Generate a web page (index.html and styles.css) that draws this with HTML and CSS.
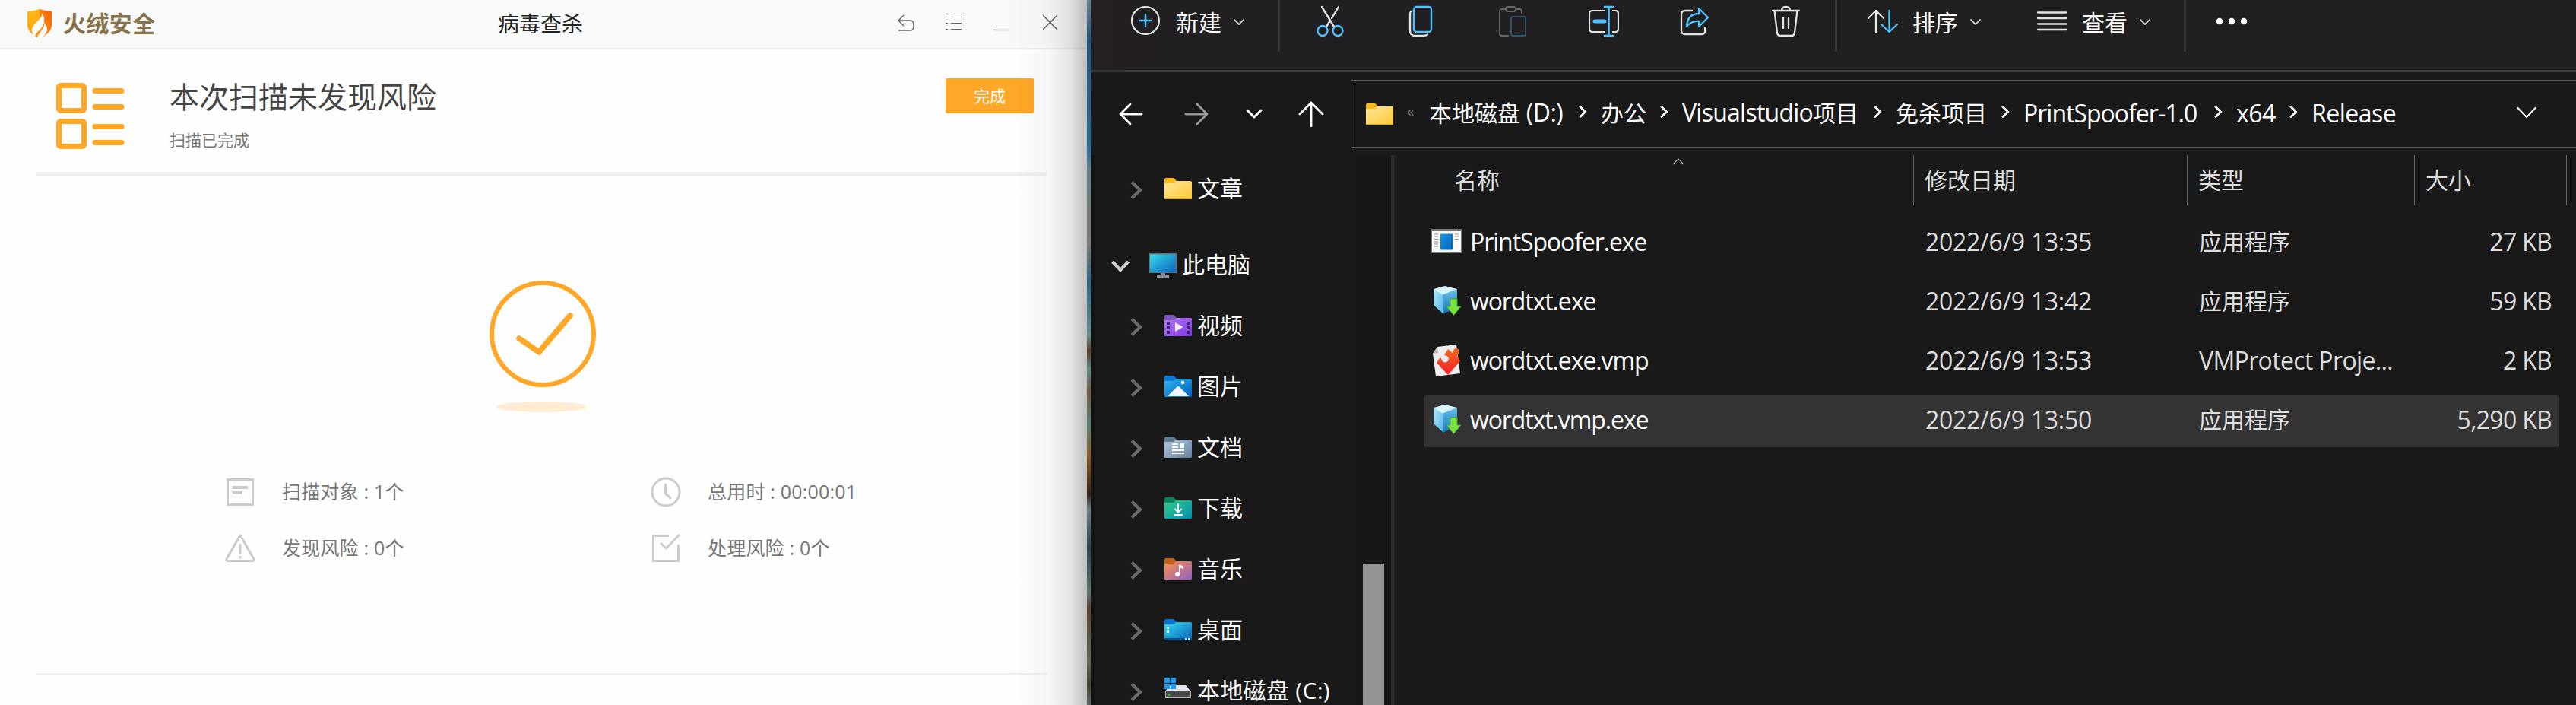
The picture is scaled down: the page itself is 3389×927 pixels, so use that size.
FILE: index.html
```html
<!DOCTYPE html>
<html lang="zh-CN">
<head>
<meta charset="utf-8">
<title>病毒查杀</title>
<link rel="stylesheet" href="styles.css">
</head>
<body>
<svg class="defs" width="0" height="0">
  <defs>
    <linearGradient id="gShieldL" x1="0" y1="0" x2="0" y2="1"><stop offset="0" stop-color="#ffb81c"/><stop offset="1" stop-color="#ffa20f"/></linearGradient>
    <linearGradient id="gShieldR" x1="1" y1="0" x2="0" y2="1"><stop offset="0" stop-color="#ff5a00"/><stop offset="1" stop-color="#ffa416"/></linearGradient>
    <linearGradient id="gYellow" x1="0" y1="0" x2="1" y2="1"><stop offset="0" stop-color="#ffe699"/><stop offset="1" stop-color="#ffc933"/></linearGradient>
    <linearGradient id="gPurple" x1="0" y1="0" x2="1" y2="1"><stop offset="0" stop-color="#b77bf7"/><stop offset="1" stop-color="#7f35e0"/></linearGradient>
    <linearGradient id="gBlue" x1="0" y1="0" x2="1" y2="1"><stop offset="0" stop-color="#2eb4f2"/><stop offset="1" stop-color="#0360b8"/></linearGradient>
    <linearGradient id="gSlate" x1="0" y1="0" x2="1" y2="1"><stop offset="0" stop-color="#b4cbe0"/><stop offset="1" stop-color="#6480a0"/></linearGradient>
    <linearGradient id="gGreen" x1="0" y1="0" x2="1" y2="1"><stop offset="0" stop-color="#33cc88"/><stop offset="1" stop-color="#028fae"/></linearGradient>
    <linearGradient id="gMusic" x1="0" y1="0" x2="1" y2="1"><stop offset="0" stop-color="#ff9248"/><stop offset="1" stop-color="#925fc4"/></linearGradient>
    <linearGradient id="gCyan" x1="0" y1="0" x2="1" y2="1"><stop offset="0" stop-color="#36dbea"/><stop offset="1" stop-color="#0a62bd"/></linearGradient>
    <linearGradient id="gApp" x1="0" y1="0" x2="1" y2="1"><stop offset="0" stop-color="#1798ea"/><stop offset="1" stop-color="#0560b8"/></linearGradient>
    <linearGradient id="gCubeL" x1="0" y1="0" x2="1" y2="1"><stop offset="0" stop-color="#b5e9fb"/><stop offset="1" stop-color="#56b8e8"/></linearGradient>
    <linearGradient id="gCubeR" x1="0" y1="0" x2="0" y2="1"><stop offset="0" stop-color="#67c0ea"/><stop offset="1" stop-color="#1477b8"/></linearGradient>
    <linearGradient id="gRed" x1="0" y1="0" x2="0" y2="1"><stop offset="0" stop-color="#f66a20"/><stop offset="1" stop-color="#f02028"/></linearGradient>
    <path id="tab" d="M0 2Q0 0 2 0H11Q13 0 14 2L16 4V8H0Z"/>
    <path id="sheet" d="M0 7H12L15.500 4H34.500Q36 4 36 5.500V26.500Q36 28 34.500 28H1.500Q0 28 0 26.500Z"/>
    <symbol id="cube" viewBox="0 0 40 40">
      <path d="M3 4L15 9.500V36L3 25Z" fill="url(#gCubeL)"/>
      <path d="M15 9.500L34 4V28L15 37Z" fill="url(#gCubeR)"/>
      <path d="M3 4L18 0L34 4L15 11.500Z" fill="#d9f4fd"/>
      <path d="M25 17H34V27H39L29.500 38.500L20 27H25Z" fill="#7be042" stroke="#43a326"/>
    </symbol>
    <symbol id="right" viewBox="0 0 16 24"><path d="M2 1.500L13 12L2 22.500" fill="none" stroke="#6b6b6b" stroke-width="4.200"/></symbol>
    <symbol id="crumb" viewBox="0 0 11 16"><path d="M2 1.500L8.500 8L2 14.500" fill="none" stroke="#fff" stroke-width="2.800" stroke-linecap="round"/></symbol>
    <symbol id="drop" viewBox="0 0 14 8"><path d="M1 1L7 7L13 1" fill="none" stroke="#cfcfcf" stroke-width="1.800" stroke-linecap="round"/></symbol>
  </defs>
</svg>

<div class="desktop">
  <section class="scanner">
    <header class="titlebar">
      <div class="brand">
        <svg width="34" height="40" viewBox="0 0 34 40">
          <path d="M17 1Q9 4 1 4V23Q2 33 17 39Z" fill="url(#gShieldL)"/>
          <path d="M17 1Q25 4 33 4V23Q32 33 17 39Z" fill="url(#gShieldR)"/>
          <path d="M20 6C22 14 7 20 7 29Q7 34 12 37C11 32 21 27 23 19C25 22 27 24 27 29Q25 35 18 39.500L11 37C13 32 21 30 23 23C23 16 24 12 20 6Z" fill="#fff"/>
          <path d="M11.500 37C11 31 19 29 22 23C21 29 16 33 14 38Z" fill="#ff9210"/>
        </svg>
        <span class="brand-name">火绒安全</span>
      </div>
      <h1 class="title">病毒查杀</h1>
      <div class="controls">
        <svg width="24" height="24" viewBox="0 0 24 24"><path d="M9 2L2 9L9 16M2 9H17Q22 9 22 14V17Q22 22 17 22H2" fill="none" stroke="#666" stroke-width="1.500"/></svg>
        <svg width="24" height="24" viewBox="0 0 24 24"><path d="M1 4.500H4M8 4.500H22M1 12.500H4M8 12.500H22M1 20.500H4M8 20.500H22" stroke="#666" stroke-width="1.200"/></svg>
        <svg width="24" height="24" viewBox="0 0 24 24"><path d="M1 21.500H22" stroke="#666" stroke-width="1.200"/></svg>
        <svg width="24" height="24" viewBox="0 0 24 24"><path d="M3 2L22 21M22 2L3 21" stroke="#666" stroke-width="1.700"/></svg>
      </div>
    </header>

    <div class="summary">
      <svg class="summary-icon" width="90" height="88" viewBox="0 0 90 88" fill="none" stroke="#ffa726">
        <rect x="3.500" y="3.500" width="33" height="33" rx="2.500" stroke-width="7"/>
        <rect x="3.500" y="50.500" width="33" height="33" rx="2.500" stroke-width="7"/>
        <path d="M51 10.500H86M51 31.500H86M51 57.500H86M51 78.500H86" stroke-width="7" stroke-linecap="round"/>
      </svg>
      <div class="summary-text">
        <h2>本次扫描未发现风险</h2>
        <p>扫描已完成</p>
      </div>
      <button class="done">完成</button>
    </div>

    <div class="result">
      <svg class="result-mark" width="142" height="174" viewBox="0 0 142 174">
        <circle cx="71" cy="71" r="67" fill="none" stroke="#ffa726" stroke-width="6"/>
        <path d="M40 77L66 95L107 47" fill="none" stroke="#ffa726" stroke-width="7.500" stroke-linecap="round" stroke-linejoin="round"/>
        <ellipse cx="69.500" cy="167" rx="59.500" ry="7" fill="#ffecd3"/>
      </svg>
      <ul class="stats">
        <li><svg width="40" height="40" viewBox="0 0 40 40" fill="none" stroke="#ccc"><rect x="3.500" y="3.500" width="33" height="33" stroke-width="3"/><path d="M9.500 14H30M9.500 21H23" stroke-width="4"/></svg><span>扫描对象 : 1个</span></li>
        <li><svg width="40" height="40" viewBox="0 0 40 40" fill="none" stroke="#ccc" stroke-width="3"><circle cx="20" cy="20" r="18"/><path d="M19.500 9V22L27 28.500"/></svg><span>总用时 : 00:00:01</span></li>
        <li><svg width="40" height="40" viewBox="0 0 40 40" fill="none" stroke="#ccc" stroke-width="3"><path d="M19 4.500Q20 2.500 21 4.500L38 34Q39 36.500 36 36.500H4Q1 36.500 2 34Z"/><path d="M20 14V28M20 30V33.500"/></svg><span>发现风险 : 0个</span></li>
        <li><svg width="40" height="40" viewBox="0 0 40 40" fill="none" stroke="#ccc" stroke-width="3"><path d="M24 3.500H3.500V36.500H36.500V15"/><path d="M13 13L20.500 20L38 2"/></svg><span>处理风险 : 0个</span></li>
      </ul>
    </div>
  </section>

  <div class="wallpaper"></div>

  <section class="explorer">
    <div class="toolbar">
      <button class="tool new">
        <svg width="40" height="40" viewBox="0 0 40 40" fill="none"><circle cx="20" cy="20" r="18" stroke="#e4e4e4" stroke-width="2.200"/><path d="M12 20H28M20 12V28" stroke="#4cc2ff" stroke-width="2.500" stroke-linecap="round"/></svg>
        <span>新建</span>
        <svg width="14" height="8"><use href="#drop"/></svg>
      </button>
      <i class="rule"></i>
      <div class="actions">
        <svg width="40" height="42" viewBox="0 0 40 42" fill="none" stroke-width="2.400"><path d="M9 2L25 28M31 2L22 17M20 20L15 28" stroke="#e4e4e4" stroke-linecap="round"/><g stroke="#4cc2ff"><circle cx="10" cy="33.500" r="6.500"/><circle cx="30" cy="33.500" r="6.500"/></g></svg>
        <svg width="40" height="42" viewBox="0 0 40 42" fill="none" stroke-width="2.400"><path d="M6 8Q5 9 5 12V33Q5 40 12 40H22Q26 40 28 38.500" stroke="#e4e4e4" stroke-linecap="round"/><rect x="10" y="2" width="23" height="33" rx="3.500" stroke="#4cc2ff"/></svg>
        <svg width="40" height="42" viewBox="0 0 40 42" fill="none" stroke-width="2"><path d="M14 40H6Q3 40 3 37V8Q3 5 6 5H11M24 5H29Q32 5 32 8V10" stroke="#68676a" stroke-linecap="round"/><rect x="11" y="2" width="13" height="6" rx="3" stroke="#68676a"/><rect x="18" y="15" width="19" height="25" rx="2.500" stroke="#2d5468"/></svg>
        <svg width="40" height="42" viewBox="0 0 40 42" fill="none" stroke-width="2.200"><path d="M21 7H5Q1 7 1 11V31Q1 35 5 35H21M31 7H35Q39 7 39 11V31Q39 35 35 35H31" stroke="#e4e4e4"/><path d="M26.500 2V40M21 2H32M21 40H32" stroke="#4cc2ff" stroke-width="2.600" stroke-linecap="round"/><path d="M8 21H21" stroke="#4cc2ff" stroke-width="5" stroke-linecap="round"/></svg>
        <svg width="40" height="42" viewBox="0 0 40 42" fill="none" stroke-width="2.300" stroke-linejoin="round" stroke-linecap="round"><path d="M16 7H7Q2 7 2 12V33Q2 38 7 38H29Q33 38 33 34V30" stroke="#e4e4e4"/><path d="M25 4L37 16L25 28V21Q15 20 9 28Q10 11 25 11Z" stroke="#4cc2ff"/></svg>
        <svg width="40" height="42" viewBox="0 0 40 42" fill="none" stroke="#e4e4e4" stroke-width="2.300" stroke-linecap="round"><path d="M2 7H37M14 7Q14 2 19.500 2Q25 2 25 7M4.500 7L8 36Q8.500 40 12 40H27Q30.500 40 31 36L34.500 7M16 17V30M23 17V30"/></svg>
      </div>
      <i class="rule"></i>
      <button class="tool sort">
        <svg width="42" height="34" viewBox="0 0 42 34" fill="none" stroke-width="2.300" stroke-linecap="round" stroke-linejoin="round"><path d="M12 32V3M2 13L12 3L22 13" stroke="#e4e4e4"/><path d="M29.500 3V31M19 21L29.500 31L40 21" stroke="#4cc2ff"/></svg>
        <span>排序</span>
        <svg width="14" height="8"><use href="#drop"/></svg>
      </button>
      <button class="tool view">
        <svg width="42" height="28" viewBox="0 0 42 28" stroke="#e4e4e4" stroke-width="2.300" stroke-linecap="round"><path d="M2 2.500H40M2 10H40M2 17.500H40M2 25H40"/></svg>
        <span>查看</span>
        <svg width="14" height="8"><use href="#drop"/></svg>
      </button>
      <i class="rule"></i>
      <svg class="more" width="42" height="10" viewBox="0 0 42 10" fill="#fff"><circle cx="5" cy="5" r="4.200"/><circle cx="21" cy="5" r="4.200"/><circle cx="37" cy="5" r="4.200"/></svg>
    </div>

    <div class="addressbar">
      <div class="history">
        <svg width="32" height="34" viewBox="0 0 32 34" fill="none" stroke="#fff" stroke-width="2.800" stroke-linecap="round" stroke-linejoin="round"><path d="M30 17H2M15 4L2 17L15 30"/></svg>
        <svg width="32" height="34" viewBox="0 0 32 34" fill="none" stroke="#9a9a9a" stroke-width="2.800" stroke-linecap="round" stroke-linejoin="round"><path d="M2 17H30M17 4L30 17L17 30"/></svg>
        <svg width="22" height="34" viewBox="0 0 22 34" fill="none" stroke="#fff" stroke-width="3" stroke-linecap="round" stroke-linejoin="round"><path d="M2 12L11 21L20 12"/></svg>
        <svg width="34" height="34" viewBox="0 0 34 34" fill="none" stroke="#fff" stroke-width="2.800" stroke-linecap="round" stroke-linejoin="round"><path d="M17 33V2M2 17L17 2L32 17"/></svg>
      </div>
      <div class="path">
        <svg class="path-folder" width="36" height="28" viewBox="0 0 36 28"><use href="#tab" fill="#fcb81c"/><use href="#sheet" fill="url(#gYellow)"/><path d="M0 27.500H36" stroke="#e5a921"/></svg>
        <span class="overflow">«</span>
        <span class="crumb c1"><span>本地磁盘 <span class="en">(D:)</span></span><svg width="11" height="16"><use href="#crumb"/></svg></span>
        <span class="crumb c2"><span>办公</span><svg width="11" height="16"><use href="#crumb"/></svg></span>
        <span class="crumb c3"><span><span class="en">Visualstudio</span>项目</span><svg width="11" height="16"><use href="#crumb"/></svg></span>
        <span class="crumb c4"><span>免杀项目</span><svg width="11" height="16"><use href="#crumb"/></svg></span>
        <span class="crumb c5"><span class="en">PrintSpoofer-1.0</span><svg width="11" height="16"><use href="#crumb"/></svg></span>
        <span class="crumb c6"><span class="en">x64</span><svg width="11" height="16"><use href="#crumb"/></svg></span>
        <span class="crumb c7"><span class="en">Release</span></span>
        <svg class="path-drop" width="28" height="16" viewBox="0 0 28 16"><path d="M2 1.500L14 14L26 1.500" fill="none" stroke="#fff" stroke-width="2"/></svg>
      </div>
    </div>

    <div class="content">
      <nav class="tree">
        <div class="node"><svg width="16" height="24"><use href="#right"/></svg><svg width="36" height="28" viewBox="0 0 36 28"><use href="#tab" fill="#fcb81c"/><use href="#sheet" fill="url(#gYellow)"/><path d="M0 27.500H36" stroke="#e5a921"/></svg><span>文章</span></div>
        <div class="node pc"><svg width="24" height="16" viewBox="0 0 24 16"><path d="M1.500 2L12 13L22.500 2" fill="none" stroke="#ccc" stroke-width="4.200"/></svg><svg width="36" height="32" viewBox="0 0 36 32"><rect width="36" height="26" fill="#66737b"/><rect x="1" y="1.500" width="34" height="23.500" fill="url(#gCyan)"/><path d="M15 26H21V29H26V32H10V29H15Z" fill="#87939a"/></svg><span>此电脑</span></div>
        <div class="node"><svg width="16" height="24"><use href="#right"/></svg><svg width="36" height="28" viewBox="0 0 36 28"><use href="#tab" fill="#7d55b8"/><use href="#sheet" fill="url(#gPurple)"/><path d="M3 9H7V13H3ZM3 15H7V19H3ZM3 21H7V25H3ZM29 9H33V13H29ZM29 15H33V19H29ZM29 21H33V25H29Z" fill="#3f2470"/><path d="M14 10L24.500 16L14 22Z" fill="#f4f0fa"/></svg><span>视频</span></div>
        <div class="node"><svg width="16" height="24"><use href="#right"/></svg><svg width="36" height="28" viewBox="0 0 36 28"><use href="#tab" fill="#0a78d4"/><use href="#sheet" fill="url(#gBlue)"/><path d="M4 27L16 15Q18 13 20 15L32 27Z" fill="#f1f6fc"/><circle cx="24" cy="9" r="2.200" fill="#fff"/></svg><span>图片</span></div>
        <div class="node"><svg width="16" height="24"><use href="#right"/></svg><svg width="36" height="28" viewBox="0 0 36 28"><use href="#tab" fill="#5f7f91"/><use href="#sheet" fill="url(#gSlate)"/><path d="M10 10H18M10 14H18M10 18H26M10 22H26" stroke="#fff" stroke-width="2"/><path d="M20 9H26V15H20Z" fill="#fff"/></svg><span>文档</span></div>
        <div class="node"><svg width="16" height="24"><use href="#right"/></svg><svg width="36" height="28" viewBox="0 0 36 28"><use href="#tab" fill="#0b8260"/><use href="#sheet" fill="url(#gGreen)"/><path d="M18 8V19.500M13.500 15L18 19.500L22.500 15M12 23H24" fill="none" stroke="#fff" stroke-width="2"/></svg><span>下载</span></div>
        <div class="node"><svg width="16" height="24"><use href="#right"/></svg><svg width="36" height="28" viewBox="0 0 36 28"><use href="#tab" fill="#c26413"/><use href="#sheet" fill="url(#gMusic)"/><circle cx="17" cy="21" r="3" fill="#fff"/><path d="M19 21V8L25 10.500V14L20.500 12.500V21Z" fill="#fff"/></svg><span>音乐</span></div>
        <div class="node"><svg width="16" height="24"><use href="#right"/></svg><svg width="36" height="28" viewBox="0 0 36 28"><use href="#tab" fill="#0873cf"/><use href="#sheet" fill="url(#gCyan)"/><path d="M0 25H36V27Q36 28 35 28H1Q0 28 0 27Z" fill="#0a4a85"/><path d="M3 10H6V13H3ZM3 15H6V18H3ZM27 25H29V27H27ZM31 25H33V27H31Z" fill="#e8f7ff"/></svg><span>桌面</span></div>
        <div class="node drive"><svg width="16" height="24"><use href="#right"/></svg><svg width="36" height="28" viewBox="0 0 36 28"><path d="M7 10H28L34.500 18H1Z" fill="#e2e2e8"/><rect x="1.500" y="17.500" width="33" height="9" fill="#484848" stroke="#b5b5b5"/><rect x="5" y="21" width="2.500" height="2.500" fill="#2bdc2b"/><path d="M0 0H7V7H0ZM8 0H15V7H8ZM0 8H7V15H0ZM8 8H15V15H8Z" fill="#1a9ce8"/></svg><span>本地磁盘 (C:)</span></div>
      </nav>
      <div class="scroll"><div class="thumb"></div></div>
      <div class="splitter"></div>
      <div class="files">
        <div class="cols">
          <div class="col name">名称<svg class="caret" width="16" height="9" viewBox="0 0 16 9"><path d="M1 8L8 1L15 8" fill="none" stroke="#b8b8b8" stroke-width="1.200"/></svg></div>
          <div class="col">修改日期</div>
          <div class="col">类型</div>
          <div class="col">大小</div>
        </div>
        <div class="row">
          <div class="name"><svg width="40" height="40" viewBox="0 0 40 40"><rect y="3" width="40" height="32" fill="#777"/><rect x="1" y="6" width="38" height="28" fill="#fafafa"/><rect x="12" y="9.500" width="16" height="21" fill="url(#gApp)"/><path d="M4 10H9M4 13H9M4 16.500H9M4 20H9M4 23H9M4 26H9M31 10H36M31 13H36M31 16.500H36" stroke="#8a8a8a"/><path d="M33 4.500H34M35.500 4.500H36.500M37.500 4.500H38.500" stroke="#ddd"/></svg><span>PrintSpoofer.exe</span></div>
          <div class="date">2022/6/9 13:35</div><div class="type">应用程序</div><div class="size">27 KB</div>
        </div>
        <div class="row">
          <div class="name"><svg width="40" height="40"><use href="#cube"/></svg><span>wordtxt.exe</span></div>
          <div class="date">2022/6/9 13:42</div><div class="type">应用程序</div><div class="size">59 KB</div>
        </div>
        <div class="row">
          <div class="name"><svg width="40" height="42" viewBox="0 0 40 42"><path d="M8 3L33 0L38 38L6 42L2 12Z" fill="#eee"/><path d="M8 3L9 11L2 12Z" fill="#bbb"/><path d="M22 6L28 11C30 10 28 6 32 5C38 5 38 12 34 14L38 22L22 40L7 24L12 17C14 20 15 25 20 23C26 20 22 14 17 14Z" fill="url(#gRed)"/></svg><span>wordtxt.exe.vmp</span></div>
          <div class="date">2022/6/9 13:53</div><div class="type vm">VMProtect Proje...</div><div class="size">2 KB</div>
        </div>
        <div class="row selected">
          <div class="name"><svg width="40" height="40"><use href="#cube"/></svg><span>wordtxt.vmp.exe</span></div>
          <div class="date">2022/6/9 13:50</div><div class="type">应用程序</div><div class="size">5,290 KB</div>
        </div>
      </div>
    </div>
  </section>
</div>
</body>
</html>
```

FILE: styles.css
```css
* { box-sizing: border-box; }
body, h1, h2, p, ul { margin: 0; padding: 0; font-weight: 400; }
body {
  width: 3389px; height: 927px; overflow: hidden; background: #191919;
  font-family: "Open Sans", "Noto Sans CJK SC", sans-serif;
}
button { border: 0; padding: 0; background: none; font: inherit; color: inherit; }
svg { display: block; flex: none; }
.defs { position: absolute; }
.desktop { display: flex; height: 927px; white-space: nowrap; }

/* scanner window */
.scanner { position: relative; width: 1430px; flex: none; background: #fefefe; font-weight: 300; }
.scanner::after {
  content: ""; position: absolute; inset: 0 0 0 auto; width: 100px; pointer-events: none;
  background: linear-gradient(90deg, rgba(0,0,0,0), rgba(0,0,0,.03) 50%, rgba(0,0,0,.1) 78%, rgba(0,0,0,.25));
}
.titlebar {
  display: grid; grid-template-columns: 655px 1fr auto; height: 65px;
  padding: 0 37px 0 35px; background: #f8faf9; border-bottom: 2px solid #eee;
}
.brand { display: flex; gap: 14px; padding-top: 11px; }
.brand-name { margin-top: -3px; font: 700 30px/42px "Noto Sans CJK SC", sans-serif; letter-spacing: .4px; color: #86724a; }
.title { margin-left: -35px; font-size: 28px; line-height: 62px; color: #222; font-weight: 400; }
.controls { display: flex; gap: 39px; padding-top: 18px; }
.summary { display: flex; align-items: flex-start; height: 166px; margin: 0 53px 0 48px; border-bottom: 5px solid #efefef; }
.summary-icon { margin: 44px 0 0 26px; }
.summary-text { margin-left: 59px; }
.summary-text h2 { margin-top: 33px; font-size: 39px; line-height: 58px; color: #444; font-weight: 400; }
.summary-text p { margin-top: 13px; font-size: 21px; line-height: 31px; color: #777; }
.done { width: 116px; height: 46px; margin: 38px 17px 0 auto; border-radius: 2px; background: #ffa726; color: #fff; font-size: 21px; line-height: 45px; font-weight: 400; }
.result { height: 656px; margin: 0 53px 0 48px; padding-top: 137px; border-bottom: 2px solid #efefef; }
.result-mark { margin: 0 0 0 595px; }
.stats { display: grid; grid-template-columns: 560px 1fr; grid-auto-rows: 74px; list-style: none; padding: 85px 0 0 248px; }
.stats li { display: flex; gap: 35px; height: 40px; align-items: center; font-size: 25px; letter-spacing: .2px; color: #777; font-weight: 400; }
.stats span { padding-bottom: 4px; }

.wallpaper {
  width: 5px; flex: none;
  background: linear-gradient(#64818d 0, #235780 55px, #2f6f9b 200px, #5f7f8b 220px, #7d7a74 320px, #2f6688 370px, #62908d 440px, #5d4128 462px, #5c8a83 485px, #6f5c48 515px, #5c8073 560px, #8c5b25 600px, #352417 650px, #6d7e83 670px, #2c4650 720px, #5c7470 780px, #5c4236 800px, #5d6c55 870px, #4b3f30 900px, #5d6a66);
}

/* explorer window */
.explorer { display: flex; flex-direction: column; flex: 1; min-width: 0; color: #fff; font-size: 30px; }
.toolbar { display: flex; height: 95px; padding-left: 52px; background: linear-gradient(90deg, #231f23, #202020 55%); border-bottom: 3px solid #3a3a3a; }
.tool { display: flex; align-items: center; height: 58px; }
.tool span { padding-bottom: 2px; }
.tool svg:first-child { margin-top: -2px; }
.tool svg:last-child { margin: 0 0 1px 16px; }
.rule { width: 3px; height: 68px; background: #353535; }
.new { width: 194px; }
.new span { margin-left: 20px; }
.new svg:first-child { margin-top: -4px; }
.actions { display: flex; width: 730px; gap: 80px; padding: 7px 0 0 46px; }
.sort { width: 223px; padding-left: 39px; }
.sort span { margin-left: 18px; }
.view { width: 233px; padding-left: 39px; }
.view span { margin-left: 18px; }
.more { margin: 23px 0 0 39px; }

.addressbar { display: flex; height: 109px; }
.history { display: flex; width: 342px; padding: 38px 0 0 37px; }
.history svg:nth-child(2) { margin-left: 54px; }
.history svg:nth-child(3) { margin-left: 49px; }
.history svg:nth-child(4) { margin-left: 47px; }
.path { display: flex; align-items: center; flex: 1; height: 89px; margin-top: 10px; padding-left: 19px; border: 1px solid #5a5a5a; border-right: 0; }
.overflow { width: 47px; padding-left: 18px; margin-top: -8px; font-size: 19px; color: #777; }
.crumb { display: flex; align-items: center; justify-content: space-between; line-height: 60px; }
.crumb > span { padding-bottom: 2px; }
.crumb svg { margin: 0 18px 5px 0; }
.en { font-size: 32px; letter-spacing: -.5px; }
.c1 { width: 226px; }
.c2 { width: 107px; }
.c3 { width: 281px; }
.c3 .en { letter-spacing: -.75px; }
.c4 { width: 168px; }
.c5 { width: 280px; }
.c5 .en { letter-spacing: -1px; }
.c6 { width: 99px; }
.path-drop { margin: 0 51px 4px auto; }

.content { display: flex; flex: 1; min-height: 0; }
.tree { width: 350px; padding-top: 6px; border-left: 5px solid #131313; overflow: hidden; }
.node { display: flex; align-items: center; height: 80px; padding-left: 47px; line-height: 30px; }
.node span { padding-bottom: 4px; }
.node svg + svg { margin: -4px 7px 0 29px; }
.node.pc { margin-top: 20px; padding-left: 22px; }
.node.pc svg + svg { margin: -3px 7px 0 26px; }
.node.drive svg + svg { margin-top: -10px; }
.node.drive span { letter-spacing: .3px; }
.scroll { width: 45px; padding: 537px 9px 0 8px; background: #171717; }
.thumb { height: 186px; background: #959595; }
.splitter { width: 8px; border-left: 4px solid #2c2c2c; background: #212121; }
.files { flex: 1; color: #dedede; }
.cols { display: grid; grid-template-columns: 680px 360px 299px 200px; height: 66px; }
.col { display: flex; align-items: center; height: 66px; padding: 0 0 4px 14px; border-right: 1px solid #636363; }
.col.name { position: relative; padding-left: 75px; }
.caret { position: absolute; left: 362px; top: 4px; }
.row { display: grid; grid-template-columns: 660px 360px 300px 1fr; align-items: center; height: 68px; margin: 10px 22px 0 35px; padding-right: 10px; }
.cols + .row { margin-top: 16px; }
.row > div { line-height: 44px; padding-bottom: 4px; }
.row .name { display: flex; align-items: center; gap: 11px; padding-left: 10px; color: #fff; font-size: 32px; letter-spacing: -1.1px; }
.row .date { font-size: 32px; letter-spacing: -.3px; }
.row .size { font-size: 32px; text-align: right; letter-spacing: -.7px; }
.row .vm { font-size: 32px; letter-spacing: -.65px; }
.selected { background: #333; border-radius: 2px; }
```
